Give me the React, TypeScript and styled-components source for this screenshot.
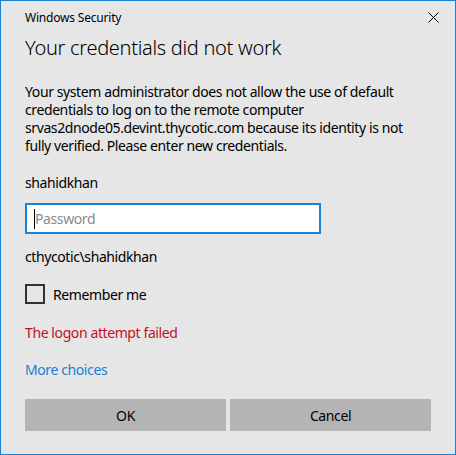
import React from "react";
import styled, { createGlobalStyle } from "styled-components";

const GlobalStyle = createGlobalStyle`
    html, body {
        margin: 0;
        padding: 0;
        background: #e6e6e6;
    }
    * {
        box-sizing: border-box;
    }
`;

const Window = styled.div`
    width: 456px;
    height: 455px;
    border: 1px solid #1883d7;
    background: #e6e6e6;
    color: #000;
    font-family: "Noto Sans", "Liberation Sans", sans-serif;
    display: flex;
    flex-direction: column;
    padding: 0 24px;
`;

const TitleBar = styled.div`
    height: 33px;
    display: flex;
    align-items: center;
    justify-content: space-between;
    font-size: 12px;
    letter-spacing: -0.2px;
    margin-right: -24px;
`;

const CloseButton = styled.button`
    width: 44px;
    height: 32px;
    border: none;
    background: transparent;
    display: flex;
    align-items: center;
    justify-content: center;
    padding: 0;
`;

const Heading = styled.h1`
    margin: 0;
    font-size: 20px;
    font-weight: 300;
    line-height: 28px;
    letter-spacing: -0.3px;
`;

interface TextProps {
    $top: number;
    $color?: string;
}

const Text = styled.p<TextProps>`
    margin: ${(p) => p.$top}px 0 0;
    font-size: 14px;
    line-height: 18px;
    letter-spacing: -0.4px;
    color: ${(p) => p.$color || "#000"};
`;

const Link = styled.a`
    display: block;
    margin-top: 19px;
    font-size: 14px;
    line-height: 18px;
    letter-spacing: -0.4px;
    color: #1a7fd4;
    text-decoration: none;
`;

const Field = styled.div`
    position: relative;
    margin-top: 11px;
    width: 296px;
    height: 31px;
`;

const Input = styled.input`
    width: 100%;
    height: 100%;
    border: 2px solid #1883d7;
    background: #fff;
    outline: none;
    padding: 0 0 0 8px;
    font-family: inherit;
    font-size: 14px;
    letter-spacing: -0.4px;
    &::placeholder {
        color: #8a8a8a;
    }
`;

const Caret = styled.span`
    position: absolute;
    left: 9px;
    top: 6px;
    width: 1px;
    height: 20px;
    background: #000;
`;

const CheckRow = styled.label`
    margin-top: 18px;
    display: flex;
    align-items: center;
    gap: 8px;
    height: 20px;
    font-size: 14px;
    letter-spacing: -0.4px;
`;

const Box = styled.span`
    width: 20px;
    height: 20px;
    border: 2px solid #333;
`;

const Buttons = styled.div`
    margin-top: 20px;
    display: grid;
    grid-template-columns: 1fr 1fr;
    gap: 4px;
`;

const Button = styled.button`
    height: 32px;
    border: none;
    background: #b4b4b4;
    font-family: inherit;
    font-size: 14px;
    letter-spacing: -0.4px;
    color: #000;
`;

export default function App() {
    return (
        <>
            <GlobalStyle />
            <Window>
                <TitleBar>
                    <span>Windows Security</span>
                    <CloseButton aria-label="Close">
                        <svg width="11" height="11" viewBox="0 0 11 11">
                            <path d="M0.5 0.5 L10.5 10.5 M10.5 0.5 L0.5 10.5" stroke="#000" strokeWidth="1" />
                        </svg>
                    </CloseButton>
                </TitleBar>
                <Heading>Your credentials did not work</Heading>
                <Text $top={21}>
                    Your system administrator does not allow the use of default credentials to log on to the remote computer
                    srvas2dnode05.devint.thycotic.com because its identity is not fully verified. Please enter new credentials.
                </Text>
                <Text $top={19}>shahidkhan</Text>
                <Field>
                    <Input placeholder="Password" type="password" />
                    <Caret />
                </Field>
                <Text $top={14}>cthycotic\shahidkhan</Text>
                <CheckRow>
                    <Box />
                    Remember me
                </CheckRow>
                <Text $top={20} $color="#c50f1f">
                    The logon attempt failed
                </Text>
                <Link href="#">More choices</Link>
                <Buttons>
                    <Button>OK</Button>
                    <Button>Cancel</Button>
                </Buttons>
            </Window>
        </>
    );
}
